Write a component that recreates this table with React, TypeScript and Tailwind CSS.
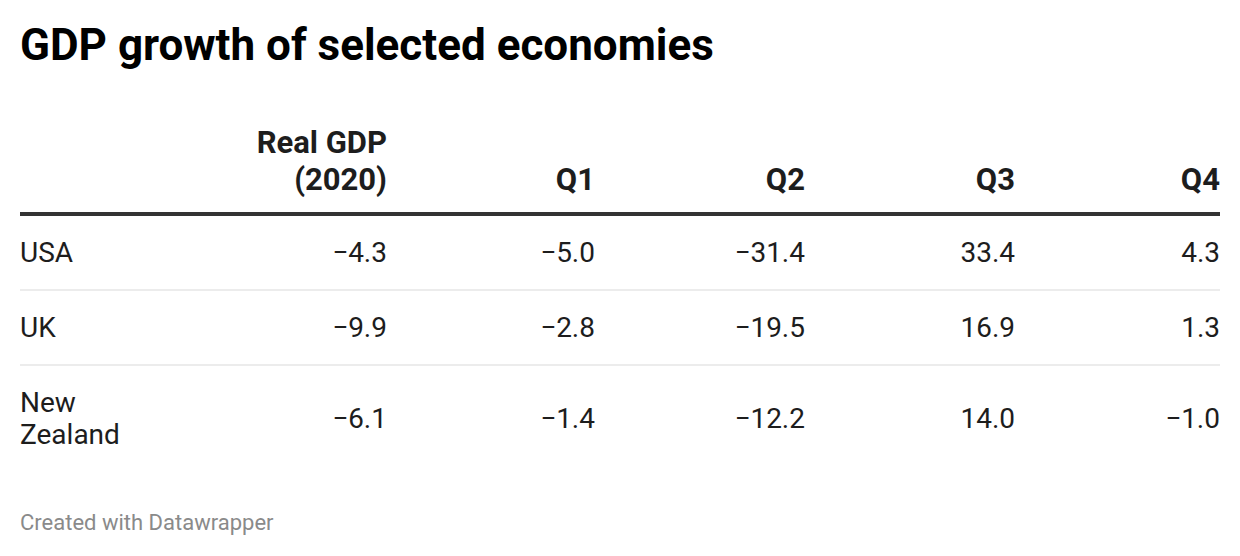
const ROWS = [
  { name: "USA", values: ["−4.3", "−5.0", "−31.4", "33.4", "4.3"] },
  { name: "UK", values: ["−9.9", "−2.8", "−19.5", "16.9", "1.3"] },
  { name: "New Zealand", values: ["−6.1", "−1.4", "−12.2", "14.0", "−1.0"] },
];

const COLS = "grid grid-cols-[120px_247px_208px_210px_210px_205px]";

export default function App() {
  return (
    <div className="w-[1240px] h-[556px] bg-white px-5 pt-[19px] text-[#1d1d1d] font-['Roboto',sans-serif]">
      <h1 className="text-[44px] leading-[52px] font-bold text-black">GDP growth of selected economies</h1>

      <div className="mt-[53px]">
        <div className={`${COLS} items-end border-b-4 border-[#333] pb-[14px] text-[31px] leading-[37px] font-bold`}>
          <div></div>
          <div className="text-right">
            Real GDP
            <br />
            (2020)
          </div>
          <div className="text-right">Q1</div>
          <div className="text-right">Q2</div>
          <div className="text-right">Q3</div>
          <div className="text-right">Q4</div>
        </div>

        {ROWS.map((row, i) => (
          <div
            key={row.name}
            className={`${COLS} items-center pt-[21px] pb-[20px] text-[28px] leading-[32px] tabular-nums ${
              i < ROWS.length - 1 ? "border-b-2 border-[#ececec]" : ""
            }`}
          >
            <div>{row.name}</div>
            {row.values.map((v, j) => (
              <div key={j} className="text-right">
                {v}
              </div>
            ))}
          </div>
        ))}
      </div>

      <div className="mt-[38px] text-[22px] leading-[28px] text-[#8a8a8a]">Created with Datawrapper</div>
    </div>
  );
}
